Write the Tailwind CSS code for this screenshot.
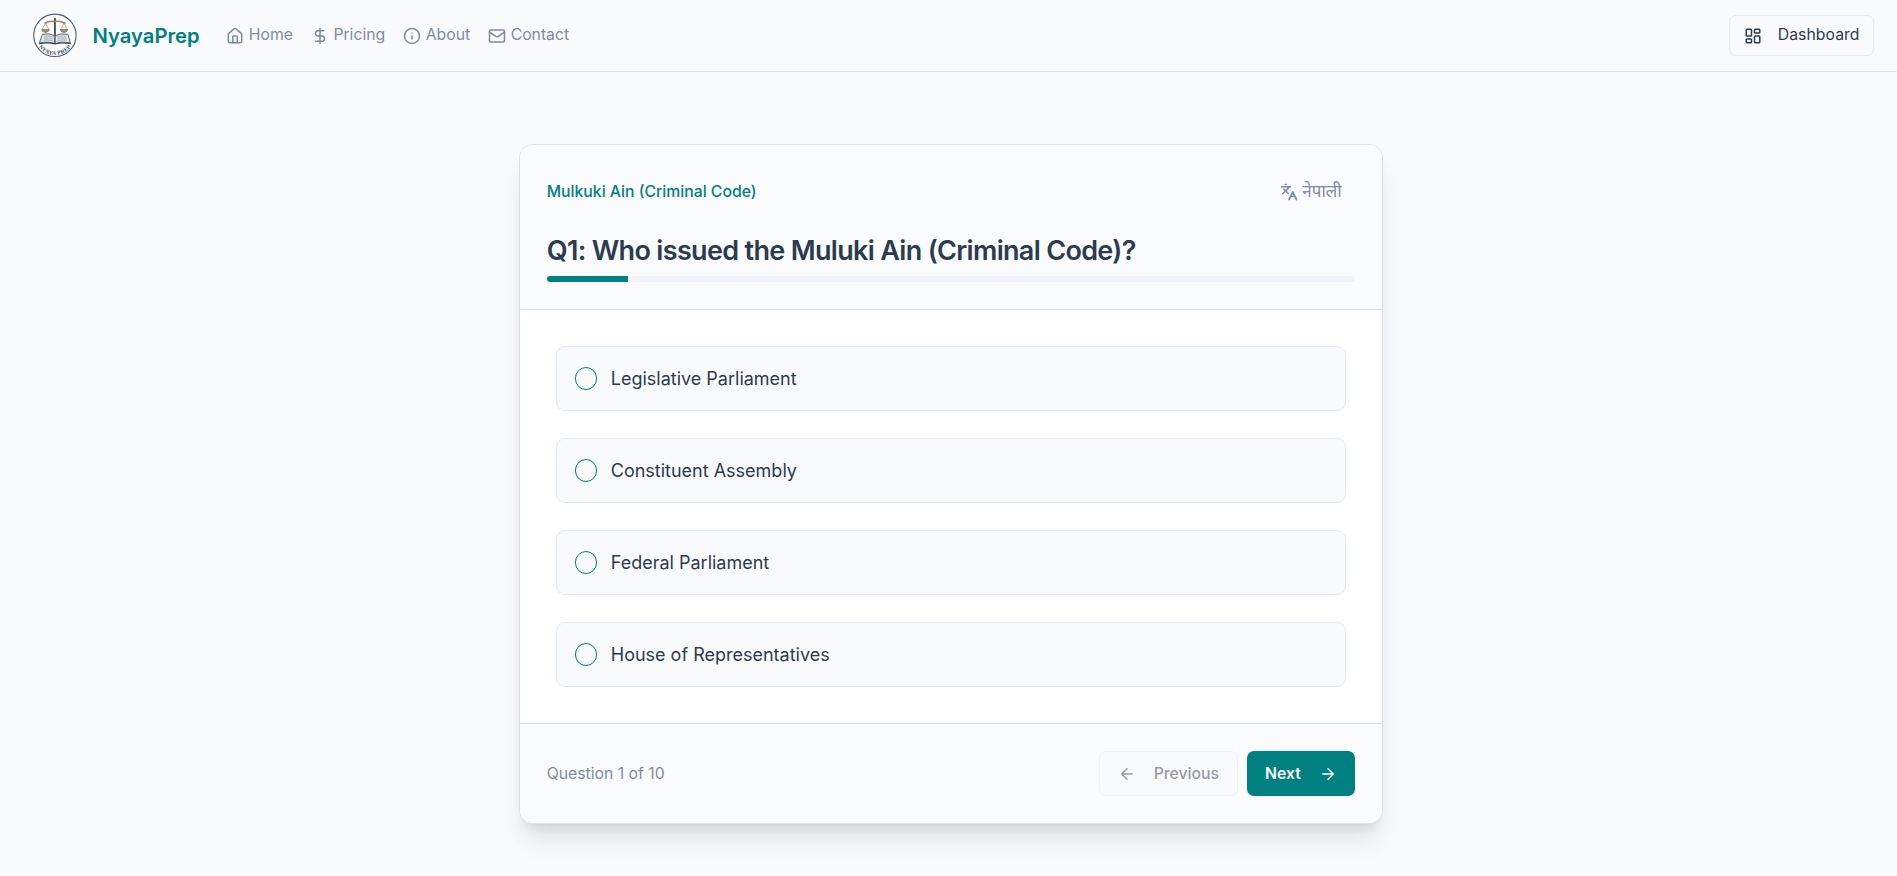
<!DOCTYPE html>
<html lang="en" class="text-[18px]">
<head>
<meta charset="utf-8">
<title>NyayaPrep</title>
<script src="https://cdn.jsdelivr.net/npm/@tailwindcss/browser@4"></script>
</head>
<body class="h-[876px] overflow-hidden bg-[#f9fafc] font-['Inter','Noto_Sans_Devanagari','Noto_Sans',sans-serif] text-[#2d3b4e]">
<header class="flex h-16 items-center border-b border-[#d8dde9] pl-[32px] pr-[23px]">
  <svg class="size-[45px] shrink-0" viewBox="0 0 45 45" fill="none">
    <circle cx="22.9" cy="22.300" r="21.200" fill="#fdfdfe" stroke="#4d5f70" stroke-width="1.100"/>
    <path d="M22.900 5v18" stroke="#3c4f60" stroke-width="1.900"/>
    <path d="M12.500 10.500Q17 7.500 22.900 8.500Q28.500 7.500 33.500 10.500" stroke="#a58250" stroke-width="1.700"/>
    <path d="M13.500 10l-3.500 7M13.500 10l3.500 7M32 10l-3.500 7M32 10l3.500 7" stroke="#7d8b98" stroke-width=".7"/>
    <path d="M9.500 16.500h8q-1 3-4 3t-4-3zM28 16.500h8q-1 3-4 3t-4-3z" fill="#b08b52" stroke="#5a6b79" stroke-width=".6"/>
    <g transform="translate(.4 4.500) scale(1 .78)">
      <path d="M10 21.500Q17 19.500 22.500 23.500Q28 19.500 35.500 21.500L38 32.500Q28 30.500 22.500 33.500Q17 30.500 7 32.500z" fill="#e3e7ea" stroke="#465866" stroke-width="1"/>
      <path d="M6.500 33.600q10-2 16 .4q6-2.400 16-.4M22.500 23.500v9.500" stroke="#2f4252" stroke-width="1.300"/>
      <path d="M12 24q5-1 8.500 1M11.500 26.500q5-1 9 1M11 29q5-1 9.500 1M25 25q4-2 8.500-1M25 27.500q4-2 9-1M25 30q4-2 9.500-1" stroke="#8b98a3" stroke-width=".8"/>
    </g>
    <path id="ring" d="M5.500 32A20.200 20.200 0 0 0 40.300 32"/>
    <text font-family="Liberation Serif" font-weight="700" font-size="5.600" letter-spacing=".3" text-anchor="middle" fill="#33475a"><textPath href="#ring" startOffset="50%">NYAYA PREP</textPath></text>
  </svg>
  <span class="ml-[15.500px] text-lg font-semibold text-[#008080]">NyayaPrep</span>
  <nav class="ml-[26.500px] flex items-center gap-4 text-sm text-[#7e8ba3]">
    <a class="flex items-center"><svg class="mr-1 mt-[1px] size-[18px]" viewBox="0 0 24 24" fill="none" stroke="currentColor" stroke-width="2" stroke-linecap="round" stroke-linejoin="round"><path d="M15 21v-8a1 1 0 0 0-1-1h-4a1 1 0 0 0-1 1v8"/><path d="M3 10a2 2 0 0 1 .709-1.528l7-5.999a2 2 0 0 1 2.582 0l7 5.999A2 2 0 0 1 21 10v9a2 2 0 0 1-2 2H5a2 2 0 0 1-2-2z"/></svg>Home</a>
    <a class="flex items-center"><svg class="mr-1 mt-[1px] size-[18px]" viewBox="0 0 24 24" fill="none" stroke="currentColor" stroke-width="2" stroke-linecap="round" stroke-linejoin="round"><path d="M12 2v20M17 5H9.500a3.500 3.500 0 0 0 0 7h5a3.500 3.500 0 0 1 0 7H6"/></svg>Pricing</a>
    <a class="flex items-center"><svg class="mr-1 mt-[1px] size-[18px]" viewBox="0 0 24 24" fill="none" stroke="currentColor" stroke-width="2" stroke-linecap="round" stroke-linejoin="round"><circle cx="12" cy="12" r="10"/><path d="M12 16v-4M12 8h.01"/></svg>About</a>
    <a class="flex items-center"><svg class="mr-1 mt-[1px] size-[18px]" viewBox="0 0 24 24" fill="none" stroke="currentColor" stroke-width="2" stroke-linecap="round" stroke-linejoin="round"><rect width="20" height="16" x="2" y="4" rx="2"/><path d="m22 7-8.970 5.700a1.940 1.940 0 0 1-2.060 0L2 7"/></svg>Contact</a>
  </nav>
  <button class="ml-auto flex h-[41px] w-[145px] items-center justify-between rounded-[7px] border border-[#e5eaf0] px-[13.500px] text-sm"><svg class="mt-px size-[18px]" viewBox="0 0 24 24" fill="none" stroke="currentColor" stroke-width="2" stroke-linecap="round" stroke-linejoin="round"><rect width="7" height="9" x="3" y="3" rx="1"/><rect width="7" height="5" x="14" y="3" rx="1"/><rect width="7" height="9" x="14" y="12" rx="1"/><rect width="7" height="5" x="3" y="16" rx="1"/></svg><span class="tracking-[0.05px]">Dashboard</span></button>
</header>
<main class="pl-[518.750px] pt-[72px]">
  <section class="h-[680px] w-[864px] overflow-hidden rounded-xl border border-[#d7dfe8] bg-white shadow-xl">
    <div class="h-[165px] border-b border-[#d7dfe8] bg-[#fafbfd] px-6 pt-6">
      <div class="flex h-[40px] items-center justify-between">
        <span class="text-sm font-medium text-[#008080]">Mulkuki Ain (Criminal Code)</span>
        <button class="mr-[13px] flex h-[40px] items-center text-[#7e8ba3]"><svg class="mr-[4px] size-[18px]" viewBox="0 0 24 24" fill="none" stroke="currentColor" stroke-width="2.300" stroke-linecap="round" stroke-linejoin="round"><path d="m5 8 6 6M4 14l6-6 2-3M2 5h12M7 2h1M22 22l-5-10-5 10M14 18h6"/></svg><span class="-mt-[2px] text-[17px] leading-[24px]">नेपाली</span></button>
      </div>
      <h1 class="mt-[21px] h-[43px] text-2xl leading-[36px] font-semibold tracking-tight">Q1: Who issued the Muluki Ain (Criminal Code)?</h1>
      <div class="h-[6px] overflow-hidden rounded-full bg-[#f2f3f9]"><div class="h-full bg-[#008080]" style="width:10%"></div></div>
    </div>
    <div class="flex h-[413px] flex-col gap-6 px-8 pt-[36px]">
      <label class="flex h-[65px] shrink-0 items-center gap-3 rounded-lg border border-[#e3e9f1] bg-[#f9fafc] px-4"><span class="size-5 rounded-full border border-[#008080]"></span>Legislative Parliament</label>
      <label class="flex h-[65px] shrink-0 items-center gap-3 rounded-lg border border-[#e3e9f1] bg-[#f9fafc] px-4"><span class="size-5 rounded-full border border-[#008080]"></span>Constituent Assembly</label>
      <label class="flex h-[65px] shrink-0 items-center gap-3 rounded-lg border border-[#e3e9f1] bg-[#f9fafc] px-4"><span class="size-5 rounded-full border border-[#008080]"></span>Federal Parliament</label>
      <label class="flex h-[65px] shrink-0 items-center gap-3 rounded-lg border border-[#e3e9f1] bg-[#f9fafc] px-4"><span class="size-5 rounded-full border border-[#008080]"></span>House of Representatives</label>
    </div>
    <div class="flex h-[100px] items-center justify-between border-t border-[#d7dfe8] bg-[#fafbfd] px-6">
      <span class="pt-px text-sm text-[#7e8ba3]">Question 1 of 10</span>
      <div class="flex gap-2 text-sm font-medium">
        <button class="flex h-10 items-center gap-4 rounded-[7px] border border-[#e3e9f1] bg-[#f9fafc] px-4 opacity-50"><svg class="size-[18px]" viewBox="0 0 24 24" fill="none" stroke="currentColor" stroke-width="2" stroke-linecap="round" stroke-linejoin="round"><path d="m12 19-7-7 7-7M19 12H5"/></svg><span class="pt-px">Previous</span></button>
        <button class="flex h-10 items-center gap-4 rounded-[7px] bg-[#008080] px-4 font-semibold text-white"><span class="pt-px">Next</span><svg class="size-[18px]" viewBox="0 0 24 24" fill="none" stroke="currentColor" stroke-width="2" stroke-linecap="round" stroke-linejoin="round"><path d="M5 12h14M12 5l7 7-7 7"/></svg></button>
      </div>
    </div>
  </section>
</main>
</body>
</html>
